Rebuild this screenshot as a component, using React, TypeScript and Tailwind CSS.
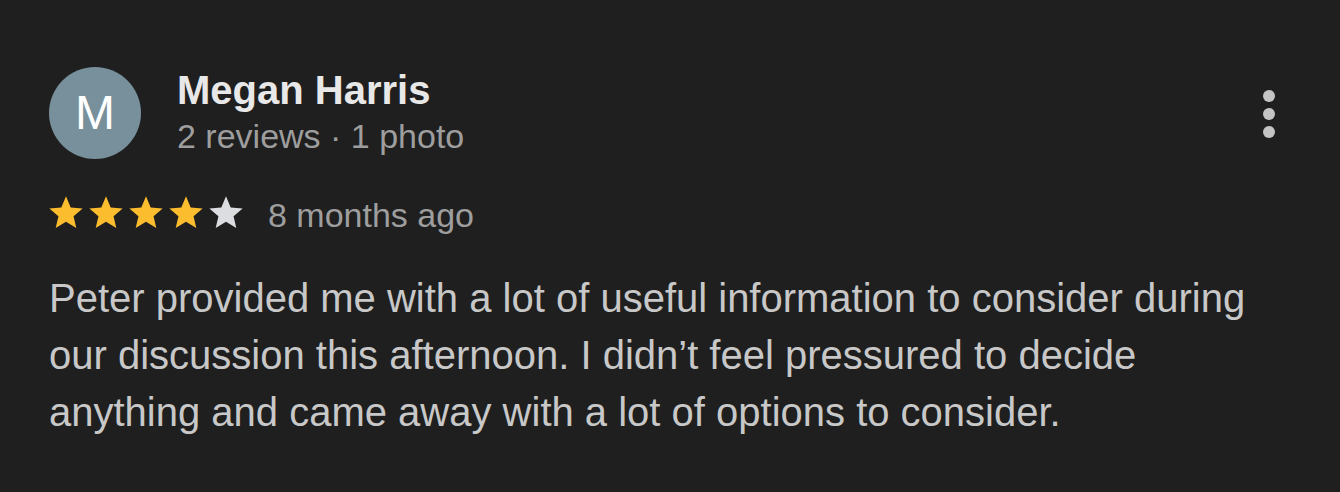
import React from 'react';

const STAR = 'M12 17.27L18.18 21l-1.64-7.03L22 9.24l-7.19-.61L12 2 9.19 8.63 2 9.24l5.46 4.73L5.82 21z';

function Stars({ rating }: { rating: number }) {
  return (
    <div className="flex -ml-[3px]">
      {[1, 2, 3, 4, 5].map((i) => (
        <svg key={i} viewBox="0 0 24 24" className="w-[40px] h-[40px]">
          <path d={STAR} fill={i <= rating ? '#fbbc2e' : '#dcdde1'} />
        </svg>
      ))}
    </div>
  );
}

export default function App() {
  return (
    <div
      className="w-[1340px] h-[492px] bg-[#1f1f1f] pl-[49px] pr-[65px] pt-[67px]"
      style={{ fontFamily: '"Liberation Sans", Arial, sans-serif' }}
    >
      {/* Header */}
      <div className="flex justify-between">
        <div className="flex">
          <div className="w-[92px] h-[92px] rounded-full bg-[#78909c] flex items-center justify-center text-white text-[48px] leading-none">
            M
          </div>
          <div className="ml-[36px] pt-[1px]">
            <div className="text-[40px] leading-[44px] font-bold text-[#e8e8e8]">Megan Harris</div>
            <div className="mt-[4px] text-[34px] leading-[40px] text-[#9e9e9e]">2 reviews · 1 photo</div>
          </div>
        </div>
        <div className="flex flex-col gap-[6px] pt-[23px]">
          <span className="block w-[12px] h-[12px] rounded-full bg-[#c4c4c4]" />
          <span className="block w-[12px] h-[12px] rounded-full bg-[#c4c4c4]" />
          <span className="block w-[12px] h-[12px] rounded-full bg-[#c4c4c4]" />
        </div>
      </div>

      {/* Rating */}
      <div className="flex items-start mt-[34px]">
        <Stars rating={4} />
        <span className="ml-[22px] pt-[2px] text-[34px] leading-[40px] text-[#9e9e9e]">8 months ago</span>
      </div>

      {/* Body */}
      <p className="mt-[35px] text-[40px] leading-[57px] text-[#c8c8c8] max-w-[1220px]">
        Peter provided me with a lot of useful information to consider during our discussion this afternoon. I didn’t feel pressured to decide anything and came away with a lot of options to consider.
      </p>
    </div>
  );
}
